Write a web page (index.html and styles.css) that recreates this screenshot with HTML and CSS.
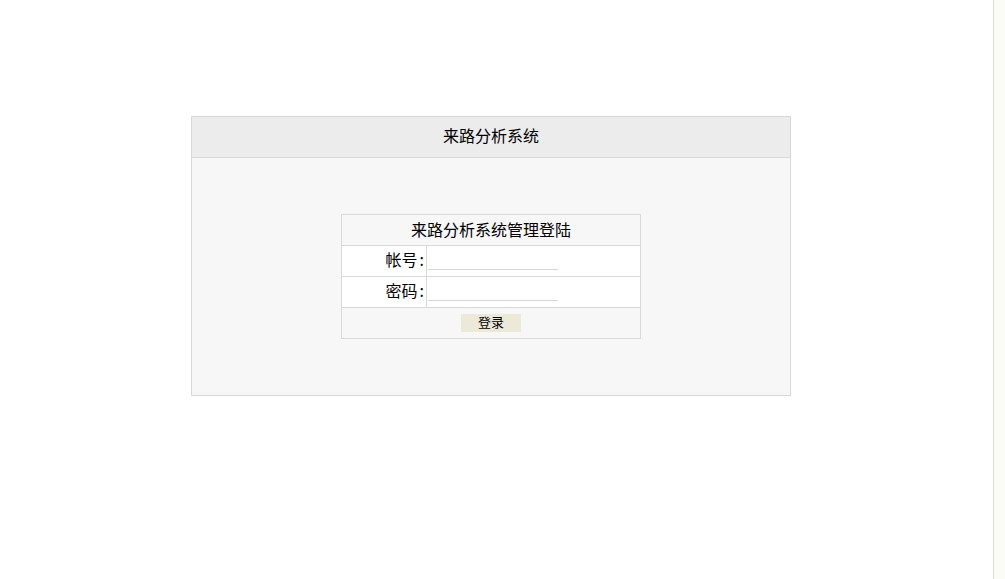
FILE: index.html
```html
<!DOCTYPE html>
<html lang="zh-CN">
<head>
    <meta charset="UTF-8">
    <title>来路分析系统</title>
    <link rel="stylesheet" href="styles.css">
</head>
<body>
    <div class="page">
        <main class="content">
            <div class="panel">
                <div class="panel-head">来路分析系统</div>
                <div class="panel-body">
                    <form class="login">
                        <table class="login-table">
                            <tr>
                                <th colspan="2" class="login-title">来路分析系统管理登陆</th>
                            </tr>
                            <tr class="field">
                                <td class="label">帐号<span class="colon">:</span></td>
                                <td><input type="text" name="username" autocomplete="off"></td>
                            </tr>
                            <tr class="field">
                                <td class="label">密码<span class="colon">:</span></td>
                                <td><input type="password" name="password" autocomplete="off"></td>
                            </tr>
                            <tr>
                                <td colspan="2" class="actions"><button type="submit">登录</button></td>
                            </tr>
                        </table>
                    </form>
                </div>
            </div>
        </main>
        <div class="scrollbar"></div>
    </div>
</body>
</html>
```

FILE: styles.css
```css
html,
body {
    height: 100%;
}

body {
    margin: 0;
    font-family: "Noto Sans CJK SC", "Liberation Sans", sans-serif;
    color: #000;
    background: #fff;
}

.page {
    display: flex;
    height: 100%;
}

.content {
    flex: 1;
}

.scrollbar {
    width: 11px;
    border-left: 1px solid #dcdcd6;
    background-color: #fcfcf7;
}

.panel {
    width: 598px;
    margin: 116px 0 0 191px;
    border: 1px solid #d8d8d8;
    background-color: #f7f7f7;
}

.panel-head {
    height: 40px;
    line-height: 36px;
    text-align: center;
    font-size: 16px;
    background-color: #ececec;
    border-bottom: 1px solid #d8d8d8;
}

.panel-body {
    padding: 56px 0;
}

.login-table {
    width: 300px;
    margin: 0 auto;
    border-collapse: collapse;
}

.login-table th,
.login-table td {
    height: 30px;
    padding: 0;
    border: 1px solid #d9d9d9;
    font-size: 16px;
    font-weight: normal;
    vertical-align: middle;
}

.login-table .login-title {
    height: 27px;
    padding-bottom: 3px;
    line-height: 20px;
    background-color: #f7f7f7;
}

.field td {
    background-color: #fff;
}

.login-table .label {
    width: 82px;
    height: 25px;
    padding: 0 2px 5px 0;
    text-align: right;
    line-height: 20px;
}

.colon {
    margin-left: 2px;
}

.field input {
    display: block;
    width: 130px;
    height: 20px;
    margin: 0 0 4px 1px;
    padding: 0;
    border: none;
    border-bottom: 1px solid #d6d6d6;
    background: #fff;
    font-size: 14px;
    outline: none;
}

.actions {
    text-align: center;
    background-color: #f7f7f7;
}

.actions button {
    display: block;
    width: 60px;
    height: 18px;
    margin: 0 auto;
    padding: 0 0 2px;
    border: none;
    background-color: #ece9d8;
    font-family: inherit;
    font-size: 13px;
    line-height: 16px;
    color: #000;
    cursor: pointer;
}
```
